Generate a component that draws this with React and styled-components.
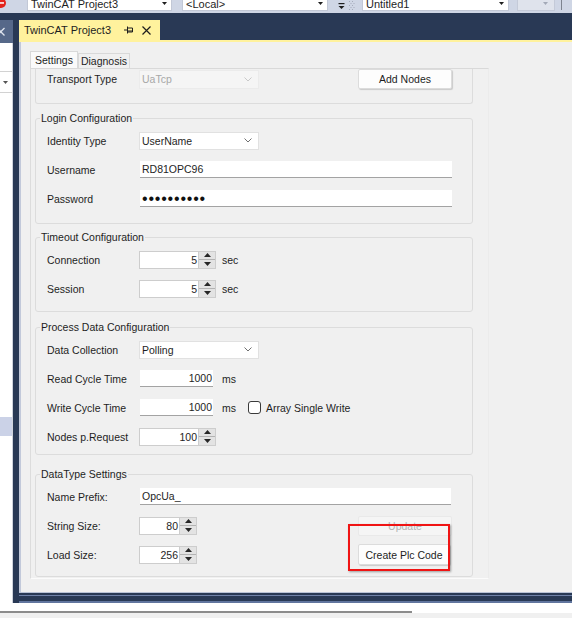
import React from 'react';
import styled, { createGlobalStyle } from 'styled-components';

const FONT = `"Liberation Sans", Arial, sans-serif`;
const NAVY = '#293955';

const Global = createGlobalStyle`
  html, body { margin: 0; padding: 0; }
  body {
    width: 572px; height: 618px; overflow: hidden; background: #fff;
    font-family: ${FONT}; font-size: 10.5px; color: #1e1e1e;
  }
`;

const Frame = styled.div`
  width: 572px; height: 618px; display: flex; flex-direction: column; overflow: hidden;
`;

/* ---------- toolbar ---------- */
const Toolbar = styled.div`
  flex: none; height: 13px; background: #cfd6e5; display: flex; align-items: flex-start; overflow: hidden;
`;
const ToolCombo = styled.div`
  flex: none; margin-left: ${p => p.$ml}px; width: ${p => p.$w}px; height: 11px; box-sizing: border-box;
  background: #fff; border: 1px solid #c2c8d6; border-top: none;
  display: flex; align-items: flex-start; justify-content: space-between; padding: 0 4px 0 3px;
  font-size: 11px; line-height: 8px; color: #1e1e1e; white-space: nowrap;
`;
const ToolCaret = styled.svg`
  flex: none; margin-top: 2px;
`;
const ToolGlyph = styled.svg`
  flex: none; margin-left: ${p => p.$ml}px;
`;
const ToolBox = styled.div`
  flex: none; margin-left: ${p => p.$ml}px; width: ${p => p.$w}px; height: 11px; box-sizing: border-box;
  background: #dfe3ec; border: 1px solid #c4cad8; border-top: none;
  display: flex; justify-content: flex-end; padding-right: 6px;
`;
const ToolSep = styled.div`
  flex: none; margin-left: ${p => p.$ml}px; width: 1px; height: 10px; background: #7d838f;
`;

const Caret = ({ color = '#1e1e1e' }) => (
  <ToolCaret width="5" height="3" viewBox="0 0 5 3"><polygon points="0,0 5,0 2.5,3" fill={color} /></ToolCaret>
);

/* ---------- main area ---------- */
const Main = styled.div`
  flex: none; height: 590px; display: flex; background: ${NAVY};
`;
const SidePanel = styled.div`
  flex: none; width: 13px; display: flex; flex-direction: column;
`;
const SideCap = styled.div` flex: none; height: 7px; `;
const SideTitle = styled.div`
  flex: none; height: 23px; background: #566889; overflow: hidden;
`;
const SideBody = styled.div`
  flex: 1; background: #fff; border-right: 1px solid #cfd3dc; display: flex; flex-direction: column;
`;
const SideCombo = styled.div`
  flex: none; margin-top: 28px; height: 22px; box-sizing: border-box; border-top: 1px solid #d2d2d2;
  border-bottom: 1px solid #d2d2d2; display: flex; align-items: center; padding-left: 3px;
`;
const SideHighlight = styled.div`
  flex: none; margin-top: 324px; height: 19px; background: #cbd2e7;
`;
const Gutter = styled.div` flex: none; width: 6px; `;

const Well = styled.div`
  flex: 1; min-width: 0; display: flex; flex-direction: column; padding-top: 7px;
`;
const DocTabRow = styled.div` flex: none; height: 20px; display: flex; `;
const DocTab = styled.div`
  flex: none; width: 141px; height: 20px; background: #fff29d; display: flex; align-items: center;
  padding-left: 5px; box-sizing: border-box; font-size: 11px; color: #1e1e1e; white-space: nowrap;
`;
const TabIcon = styled.svg` flex: none; margin-left: ${p => p.$ml}px; `;
const DocRule = styled.div` flex: none; height: 2px; background: #fff29d; `;
const DocBody = styled.div`
  flex: none; height: 550px; box-sizing: border-box; background: #f0f0f0; border-left: 2px solid #c2c9da;
  padding: 9px 0 0 9px; overflow: hidden;
`;
const DocFooter = styled.div`
  flex: none; height: 11px;
  background: linear-gradient(#b9c2d6 0 1px, ${NAVY} 1px 3px, #6f81a8 3px 4px, ${NAVY} 4px 9px, #61759e 9px 11px);
`;

/* ---------- tab control ---------- */
const TabStrip = styled.div` height: 17px; display: flex; align-items: flex-end; `;
const PageTab = styled.div`
  flex: none; width: ${p => p.$w}px; height: ${p => (p.$active ? 17 : 15)}px; box-sizing: border-box;
  border: 1px solid #d9d9d9; border-bottom: none; background: ${p => (p.$active ? '#fafafa' : '#f0f0f0')};
  display: flex; align-items: center; justify-content: center;
`;
const TabPage = styled.div`
  width: 459px; height: 511px; box-sizing: border-box; overflow: hidden;
  border-top: 1px solid #d9d9d9; border-left: 1px solid #dcdcdc; border-right: 1px solid #ebebeb;
  border-bottom: 1px solid #fbfbfb; padding-left: 4px; display: flex; flex-direction: column;
`;

/* ---------- groups ---------- */
const ClippedGroup = styled.div`
  flex: none; width: 438px; box-sizing: border-box; border: 1px solid #dcdcdc; border-top: none;
  border-radius: 0 0 3px 3px; padding: 0 20px 14px 11px;
`;
const Group = styled.fieldset`
  flex: none; width: 438px; box-sizing: border-box; min-width: 0; margin: ${p => p.$mt}px 0 0 0;
  border: 1px solid #dcdcdc; border-radius: 3px; padding: 2px 20px ${p => p.$pb}px 11px;
`;
const Legend = styled.legend`
  padding: 0 1px; margin-left: -7px; line-height: 12px; font-size: 10.5px; color: #1e1e1e;
`;
const Row = styled.div`
  height: ${p => p.$h || 29}px; display: flex; align-items: center;
`;
const Label = styled.div`
  flex: none; width: 92px; white-space: nowrap;
`;
const Combo = styled.div`
  flex: none; width: 120px; height: ${p => p.$h || 18}px; box-sizing: border-box; display: flex; align-items: center;
  justify-content: space-between; padding: 0 6px 0 2px;
  background: ${p => (p.$disabled ? '#f5f5f5' : '#fff')};
  border: 1px solid ${p => (p.$disabled ? '#ebebeb' : '#e1e1e1')};
  color: ${p => (p.$disabled ? '#a8a8a8' : '#1e1e1e')};
`;
const Chevron = styled.svg` flex: none; `;
const TextBox = styled.div`
  flex: none; width: ${p => p.$w}px; height: 17px; box-sizing: border-box; margin-left: 1px; background: #fff;
  border-bottom: 1px solid #a3a3a3; display: flex; align-items: center;
  justify-content: ${p => (p.$right ? 'flex-end' : 'flex-start')}; padding: 0 1px 0 2px; white-space: nowrap;
`;
const Dots = styled.span`
  font-size: 16px; line-height: 15px; letter-spacing: 0.8px; color: #111;
`;
const Spin = styled.div`
  flex: none; width: ${p => p.$w}px; height: 18px; box-sizing: border-box; border: 1px solid #cdcdcd;
  background: #fff; display: flex;
`;
const SpinValue = styled.div`
  flex: 1; display: flex; align-items: center; justify-content: flex-end; padding-right: 1px;
`;
const SpinButtons = styled.div`
  flex: none; width: 16px; background: #e3e3e3; border-left: 1px solid #cdcdcd; display: flex; flex-direction: column;
`;
const SpinHalf = styled.div`
  flex: 1; display: flex; align-items: center; justify-content: center;
  & + & { border-top: 1px solid #b3b3b3; }
`;
const Unit = styled.span` flex: none; margin-left: ${p => p.$ml}px; `;
const CheckBox = styled.span`
  flex: none; width: 13px; height: 13px; box-sizing: border-box; margin-left: ${p => p.$ml}px;
  border: 1px solid #3a3a3a; border-radius: 3px; background: #fff;
`;
const CheckLabel = styled.span` flex: none; margin-left: 5px; white-space: nowrap; `;
const Button = styled.button`
  flex: none; margin-left: auto; width: ${p => p.$w || 94}px;
  height: ${p => p.$h || 20}px; box-sizing: border-box; padding: 0;
  font-family: ${FONT}; font-size: 10.5px;
  color: ${p => (p.$disabled ? '#b3b3b3' : '#1e1e1e')};
  background: ${p => (p.$disabled ? '#f5f5f5' : '#fdfdfd')};
  border: 1px solid ${p => (p.$disabled ? '#e9e9e9' : '#dcdcdc')}; border-radius: 2px;
  box-shadow: ${p => (p.$disabled ? 'none' : '1px 1px 1px rgba(0,0,0,0.16)')};
`;
const Marked = styled.div`
  flex: none; margin-left: auto; margin-right: 2px; position: relative; display: flex;
`;
const MarkBox = styled.span`
  position: absolute; left: -10px; top: -20px; width: 102px; height: 47px; box-sizing: border-box;
  border: 2px solid #f01414; box-shadow: 1px 1px 2px rgba(0,0,0,0.35); pointer-events: none;
`;
const BottomStrip = styled.div`
  flex: none; height: 15px; background: #fff; display: flex; flex-direction: column; padding-top: 8px; box-sizing: border-box;
`;
const BottomLine = styled.div` flex: none; width: 412px; height: 2px; background: #8c8c8c; `;
const BottomFill = styled.div` flex: 1; background: #f0f0f0; `;

const ChevronIcon = ({ color = '#707070' }) => (
  <Chevron width="8" height="5" viewBox="0 0 8 5">
    <path d="M0.5 0.5 L4 4 L7.5 0.5" fill="none" stroke={color} strokeWidth="1" />
  </Chevron>
);

const SpinBox = ({ w, value }) => (
  <Spin $w={w}>
    <SpinValue>{value}</SpinValue>
    <SpinButtons>
      <SpinHalf>
        <svg width="7" height="4" viewBox="0 0 7 4"><polygon points="0,4 7,4 3.5,0" fill="#262626" /></svg>
      </SpinHalf>
      <SpinHalf>
        <svg width="7" height="4" viewBox="0 0 7 4"><polygon points="0,0 7,0 3.5,4" fill="#262626" /></svg>
      </SpinHalf>
    </SpinButtons>
  </Spin>
);

export default function App() {
  return (
    <Frame>
      <Global />
      <Toolbar>
        <ToolGlyph $ml={0} width="9" height="13" viewBox="0 0 9 13">
          <circle cx="1" cy="3" r="5" fill="#e3231b" />
          <rect x="0" y="2.2" width="4" height="1.5" fill="#fff" />
        </ToolGlyph>
        <ToolCombo $ml={18} $w={145}>
          <span>TwinCAT Project3</span>
          <Caret />
        </ToolCombo>
        <ToolCombo $ml={10} $w={146}>
          <span>&lt;Local&gt;</span>
          <Caret />
        </ToolCombo>
        <ToolGlyph $ml={10} width="7" height="11" viewBox="0 0 7 11">
          <rect x="0.5" y="3" width="6" height="1.2" fill="#1e1e1e" />
          <polygon points="0.5,6 6.5,6 3.5,9" fill="#1e1e1e" />
        </ToolGlyph>
        <ToolGlyph $ml={4} width="6" height="12" viewBox="0 0 6 12">
          <g fill="#a4abba">
            <rect x="0" y="1" width="1" height="1" /><rect x="3" y="1" width="1" height="1" />
            <rect x="1.5" y="3" width="1" height="1" /><rect x="4.5" y="3" width="1" height="1" />
            <rect x="0" y="5" width="1" height="1" /><rect x="3" y="5" width="1" height="1" />
            <rect x="1.5" y="7" width="1" height="1" /><rect x="4.5" y="7" width="1" height="1" />
            <rect x="0" y="9" width="1" height="1" /><rect x="3" y="9" width="1" height="1" />
          </g>
        </ToolGlyph>
        <ToolCombo $ml={7} $w={147}>
          <span>Untitled1</span>
          <Caret />
        </ToolCombo>
        <ToolBox $ml={8} $w={38}>
          <Caret color="#a3a9b7" />
        </ToolBox>
        <ToolSep $ml={6} />
      </Toolbar>

      <Main>
        <SidePanel>
          <SideCap />
          <SideTitle>
            <svg width="13" height="23" viewBox="0 0 13 23">
              <path d="M-3 8 L4.5 15.5 M-3 15.5 L4.5 8" stroke="#dfe4ee" strokeWidth="1.3" fill="none" />
            </svg>
          </SideTitle>
          <SideBody>
            <SideCombo>
              <svg width="5" height="3" viewBox="0 0 5 3"><polygon points="0,0 5,0 2.5,3" fill="#555" /></svg>
            </SideCombo>
            <SideHighlight />
          </SideBody>
        </SidePanel>
        <Gutter />
        <Well>
          <DocTabRow>
            <DocTab>
              <span>TwinCAT Project3</span>
              <TabIcon $ml={13} width="9" height="8" viewBox="0 0 9 8">
                <path d="M0 4 H3 M3.5 0.5 V7.5 M3.5 2 H8.5 V6 H3.5 M3.5 5 H8.5" stroke="#1e1e1e" strokeWidth="1" fill="none" />
              </TabIcon>
              <TabIcon $ml={9} width="9" height="9" viewBox="0 0 9 9">
                <path d="M0.5 0.5 L8.5 8.5 M8.5 0.5 L0.5 8.5" stroke="#1e1e1e" strokeWidth="1.2" fill="none" />
              </TabIcon>
            </DocTab>
          </DocTabRow>
          <DocRule />
          <DocBody>
            <TabStrip>
              <PageTab $active $w={48}>Settings</PageTab>
              <PageTab $w={52}>Diagnosis</PageTab>
            </TabStrip>
            <TabPage>
              <ClippedGroup>
                <Row $h={20}>
                  <Label>Transport Type</Label>
                  <Combo $disabled $h={19}>
                    <span>UaTcp</span>
                    <ChevronIcon color="#c9c9c9" />
                  </Combo>
                  <Button>Add Nodes</Button>
                </Row>
              </ClippedGroup>

              <Group $mt={8} $pb={10}>
                <Legend>Login Configuration</Legend>
                <Row>
                  <Label>Identity Type</Label>
                  <Combo>
                    <span>UserName</span>
                    <ChevronIcon />
                  </Combo>
                </Row>
                <Row>
                  <Label>Username</Label>
                  <TextBox $w={312}>RD81OPC96</TextBox>
                </Row>
                <Row>
                  <Label>Password</Label>
                  <TextBox $w={312}><Dots>••••••••••</Dots></TextBox>
                </Row>
              </Group>

              <Group $mt={7} $pb={8}>
                <Legend>Timeout Configuration</Legend>
                <Row>
                  <Label>Connection</Label>
                  <SpinBox w={77} value="5" />
                  <Unit $ml={6}>sec</Unit>
                </Row>
                <Row>
                  <Label>Session</Label>
                  <SpinBox w={77} value="5" />
                  <Unit $ml={6}>sec</Unit>
                </Row>
              </Group>

              <Group $mt={9} $pb={3}>
                <Legend>Process Data Configuration</Legend>
                <Row>
                  <Label>Data Collection</Label>
                  <Combo>
                    <span>Polling</span>
                    <ChevronIcon />
                  </Combo>
                </Row>
                <Row>
                  <Label>Read Cycle Time</Label>
                  <TextBox $w={73} $right>1000</TextBox>
                  <Unit $ml={9}>ms</Unit>
                </Row>
                <Row>
                  <Label>Write Cycle Time</Label>
                  <TextBox $w={73} $right>1000</TextBox>
                  <Unit $ml={9}>ms</Unit>
                  <CheckBox $ml={12} />
                  <CheckLabel>Array Single Write</CheckLabel>
                </Row>
                <Row>
                  <Label>Nodes p.Request</Label>
                  <SpinBox w={77} value="100" />
                </Row>
              </Group>

              <Group $mt={13} $pb={7}>
                <Legend>DataType Settings</Legend>
                <Row>
                  <Label>Name Prefix:</Label>
                  <TextBox $w={311}>OpcUa_</TextBox>
                </Row>
                <Row>
                  <Label>String Size:</Label>
                  <SpinBox w={58} value="80" />
                  <Button $disabled>Update</Button>
                </Row>
                <Row>
                  <Label>Load Size:</Label>
                  <SpinBox w={58} value="256" />
                  <Marked>
                    <Button $w={92} $h={21}>Create Plc Code</Button>
                    <MarkBox />
                  </Marked>
                </Row>
              </Group>
            </TabPage>
          </DocBody>
          <DocFooter />
        </Well>
      </Main>

      <BottomStrip>
        <BottomLine />
        <BottomFill />
      </BottomStrip>
    </Frame>
  );
}
